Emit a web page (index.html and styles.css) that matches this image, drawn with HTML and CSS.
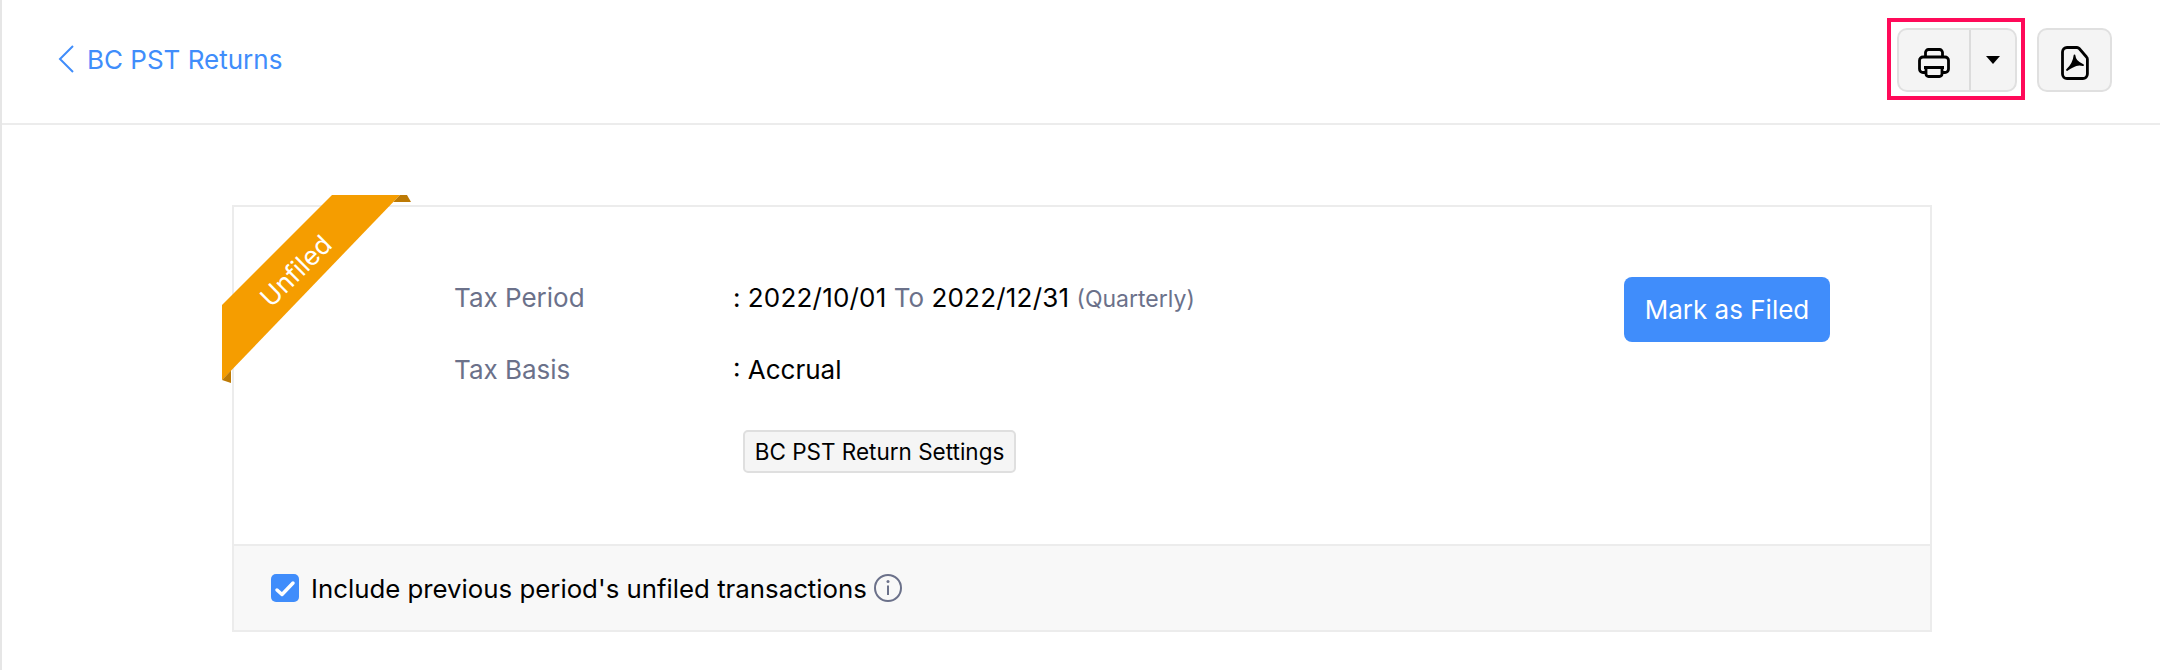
FILE: index.html
```html
<!DOCTYPE html>
<html lang="en">
<head>
<meta charset="utf-8">
<title>BC PST Returns</title>
<link rel="stylesheet" href="styles.css">
</head>
<body>
<div class="page">
  <header class="topbar">
    <a class="back" href="#">
      <svg class="back-icon" viewBox="0 0 16 28" aria-hidden="true"><path d="M15 1 2 14l13 13"/></svg>
      <span class="back-text">BC PST Returns</span>
    </a>
    <div class="actions">
      <div class="highlight">
        <div class="split">
          <button class="split-main" type="button">
            <svg class="icon" viewBox="0 0 32 30" aria-hidden="true">
              <path d="M7.500 9V4.500a3 3 0 0 1 3-3h11a3 3 0 0 1 3 3V9"/>
              <path d="M8 24.500H5A3.500 3.500 0 0 1 1.500 21v-8.500A3.500 3.500 0 0 1 5 9h22a3.500 3.500 0 0 1 3.500 3.500V21a3.500 3.500 0 0 1-3.500 3.500h-3"/>
              <path d="M6 19.500h20"/>
              <path d="M8 19.500v6.500a2.500 2.500 0 0 0 2.500 2.500h11a2.500 2.500 0 0 0 2.500-2.500v-6.500"/>
            </svg>
          </button>
          <button class="split-caret" type="button"><span class="caret"></span></button>
        </div>
      </div>
      <button class="pdf" type="button">
        <svg class="icon pdf-icon" viewBox="0 0 28 34" aria-hidden="true">
          <path d="M6 1.500h10a3 3 0 0 1 2.200 1l7.300 8.500a3 3 0 0 1 .900 2.200V28a4.500 4.500 0 0 1-4.500 4.500H6A4.500 4.500 0 0 1 1.500 28V6A4.500 4.500 0 0 1 6 1.500Z"/>
          <path class="pdf-mark" d="M13.500 9.500c.5 4 2 6.500 8.500 9.500-5-1-8-.5-16 5 4-4 7-9 7.500-14.500Z"/>
        </svg>
      </button>
    </div>
  </header>
  <main class="content">
    <section class="card">
      <div class="ribbon">
        <svg class="ribbon-art" viewBox="0 0 190 190" aria-hidden="true">
          <path class="ribbon-band" d="M110 0H178L0 185V110Z"/>
          <path class="ribbon-fold" d="M178 0h7l4 7H171.300Z"/>
          <path class="ribbon-fold" d="M9 175.600V188l-9-3Z"/>
        </svg>
        <span class="ribbon-text">Unfiled</span>
      </div>
      <div class="card-body">
        <div class="details">
          <div class="row">
            <span class="label">Tax Period</span>
            <span class="value">: <span class="date">2022/10/01</span> <span class="muted">To</span> <span class="date">2022/12/31</span> <span class="muted small">(Quarterly)</span></span>
          </div>
          <div class="row">
            <span class="label">Tax Basis</span>
            <span class="value">: Accrual</span>
          </div>
          <button class="settings" type="button">BC PST Return Settings</button>
        </div>
        <button class="primary" type="button">Mark as Filed</button>
      </div>
      <footer class="card-foot">
        <span class="check">
          <svg viewBox="0 0 28 28" aria-hidden="true"><path d="M6 16l5 4.500L22 9"/></svg>
        </span>
        <span class="foot-label">Include previous period's unfiled transactions</span>
        <svg class="info" viewBox="0 0 28 28" aria-hidden="true">
          <circle cx="14" cy="14" r="13"/>
          <path d="M14 11.500V21"/>
          <circle class="info-dot" cx="14" cy="7.500" r="1.500"/>
        </svg>
      </footer>
    </section>
  </main>
</div>
</body>
</html>
```

FILE: styles.css
```css
* { box-sizing: border-box; }
html, body { margin: 0; padding: 0; background: #fff; }
body {
  font-family: Inter, "Liberation Sans", sans-serif;
  color: #000;
  height: 670px;
  overflow: hidden;
}
button { font-family: inherit; cursor: pointer; margin: 0; }

.page {
  height: 670px;
  border-left: 2px solid #e6e6e6;
}

.topbar {
  height: 125px;
  border-bottom: 2px solid #ececec;
  display: flex;
  align-items: flex-start;
  justify-content: space-between;
  padding: 18px 48px 0 56px;
}
.back {
  display: flex;
  align-items: center;
  gap: 13px;
  margin-top: 25px;
  color: #408dfb;
  text-decoration: none;
  font-size: 26px;
  line-height: 30px;
}
.back-text { padding-top: 2px; }
.back-icon { width: 16px; height: 28px; fill: none; stroke: #408dfb; stroke-width: 2; }

.actions { display: flex; align-items: flex-start; gap: 12px; }
.highlight {
  border: 4px solid #ff0a59;
  padding: 6px 4px 6px 6px;
  height: 82px;
}
.split {
  display: flex;
  width: 120px;
  height: 64px;
  background: #f4f4f4;
  border: 2px solid #e0e0e0;
  border-radius: 10px;
  overflow: hidden;
}
.split-main, .split-caret {
  background: transparent;
  border: 0;
  padding: 0;
  display: flex;
  align-items: center;
  justify-content: center;
}
.split-main { width: 72px; border-right: 2px solid #dcdcdc; padding-top: 6px; }
.split-caret { flex: 1; }
.caret {
  width: 0;
  height: 0;
  border-left: 7px solid transparent;
  border-right: 7px solid transparent;
  border-top: 8px solid #000;
}
.icon { width: 32px; height: 30px; fill: none; stroke: #000; stroke-width: 2.800; }
.pdf {
  width: 75px;
  height: 64px;
  margin-top: 10px;
  background: #f4f4f4;
  border: 2px solid #e0e0e0;
  border-radius: 10px;
  padding: 6px 0 0;
  display: flex;
  align-items: center;
  justify-content: center;
}
.pdf-icon { width: 28px; height: 34px; }
.pdf-mark { fill: #000; stroke: #000; stroke-width: 1.800; stroke-linejoin: round; }

.content { padding: 80px 226px 0 230px; }
.card {
  position: relative;
  width: 1700px;
  height: 427px;
  border: 2px solid #ececec;
  display: flex;
  flex-direction: column;
}
.ribbon {
  position: absolute;
  left: -12px;
  top: -12px;
  width: 190px;
  height: 190px;
}
.ribbon-art { display: block; width: 190px; height: 190px; }
.ribbon-band { fill: #f59d00; }
.ribbon-fold { fill: #bd7a05; }
.ribbon-text {
  position: absolute;
  left: 24px;
  top: 61px;
  width: 100px;
  text-align: center;
  color: #fff;
  font-size: 26px;
  line-height: 30px;
  transform: rotate(-45deg);
}

.card-body {
  flex: 1;
  display: flex;
  align-items: flex-start;
  justify-content: space-between;
  padding: 70px 100px 0 220px;
  border-bottom: 2px solid #ececec;
}
.details { padding-top: 4px; }
.row { display: flex; align-items: center; height: 32px; margin-bottom: 40px; font-size: 26px; }
.label { width: 279px; color: #6b718a; }
.value { color: #000; white-space: pre-wrap; }
.date { letter-spacing: 0.2px; }
.muted { color: #6b718a; }
.small { font-size: 23px; }
.settings {
  display: block;
  margin: 45px 0 0 289px;
  width: 273px;
  height: 43px;
  padding: 0;
  background: #f5f5f5;
  border: 2px solid #dfdfdf;
  border-radius: 5px;
  color: #000;
  font-size: 22.500px;
}
.primary {
  width: 206px;
  height: 65px;
  background: #408dfb;
  border: 0;
  border-radius: 8px;
  color: #fff;
  font-size: 26px;
}
.card-foot {
  height: 84px;
  background: #f8f8f8;
  display: flex;
  align-items: center;
  padding-left: 37px;
}
.check {
  width: 28px;
  height: 28px;
  border-radius: 5px;
  background: #408dfb;
  display: flex;
}
.check svg { width: 28px; height: 28px; fill: none; stroke: #fff; stroke-width: 3.500; stroke-linecap: round; stroke-linejoin: round; }
.foot-label { margin-left: 12px; font-size: 25.800px; }
.info { margin-left: 7px; width: 28px; height: 28px; fill: none; stroke: #6b718a; stroke-width: 2; }
.info-dot { fill: #6b718a; stroke: none; }
```
